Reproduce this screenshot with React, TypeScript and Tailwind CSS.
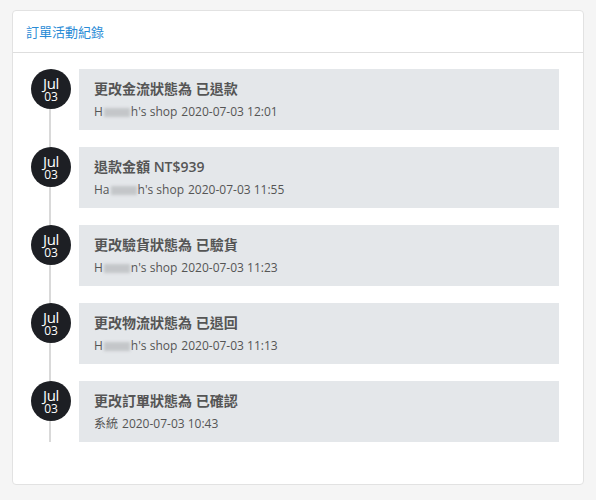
const logs = [
  { title: '更改金流狀態為 已退款', by: 'shop', pre: 'H', post: "h's shop", time: '2020-07-03 12:01' },
  { title: '退款金額 NT$939', by: 'shop', pre: 'Ha', post: "h's shop", time: '2020-07-03 11:55' },
  { title: '更改驗貨狀態為 已驗貨', by: 'shop', pre: 'H', post: "n's shop", time: '2020-07-03 11:23' },
  { title: '更改物流狀態為 已退回', by: 'shop', pre: 'H', post: "h's shop", time: '2020-07-03 11:13' },
  { title: '更改訂單狀態為 已確認', by: 'system', pre: '系統', post: '', time: '2020-07-03 10:43' },
];

export default function App() {
  return (
    <div
      className="w-[596px] h-[500px] bg-[#f5f5f5] pt-[10px] px-[12px]"
      style={{ fontFamily: '"Open Sans", "Noto Sans CJK TC", sans-serif' }}
    >
      <div className="h-[475px] bg-white border border-[#e2e2e2] rounded-[4px]">
        {/* Header */}
        <div className="h-[42px] border-b border-[#dedede] flex items-center pl-[13px] pt-[3px]">
          <h3 className="text-[13px] text-[#2a8bd6]">訂單活動紀錄</h3>
        </div>

        {/* Timeline */}
        <div className="pt-[16px] pl-[18px] pr-[24px]">
          <div className="relative flex flex-col gap-[17px]">
            <div className="absolute left-[18px] top-[20px] bottom-0 w-[2px] bg-[#d9d9d9]" />
            {logs.map((log, i) => (
              <div key={i} className="relative flex gap-[8px]">
                <div className="w-[40px] h-[40px] rounded-full bg-[#1d1f24] text-white flex flex-col items-center justify-center shrink-0">
                  <span className="text-[15px] leading-[16px] tracking-tight">Jul</span>
                  <span className="text-[12px] leading-[12px]">03</span>
                </div>
                <div className="flex-1 h-[61px] bg-[#e4e7ea] pl-[15px] pt-[11px]">
                  <p className="text-[14px] font-semibold text-[#555] leading-[18px]">{log.title}</p>
                  <p className="text-[12px] text-[#555] leading-[16px] mt-[6px] flex items-center">
                    {log.by === 'shop' ? (
                      <>
                        <span>{log.pre}</span>
                        <span className="inline-block w-[26px] h-[9px] bg-[#c4c6c9] blur-[1.5px] mx-[1px]" />
                        <span>{log.post}</span>
                      </>
                    ) : (
                      <span>{log.pre}</span>
                    )}
                    <span className="ml-[4px]">{log.time}</span>
                  </p>
                </div>
              </div>
            ))}
          </div>
        </div>
      </div>
    </div>
  );
}
